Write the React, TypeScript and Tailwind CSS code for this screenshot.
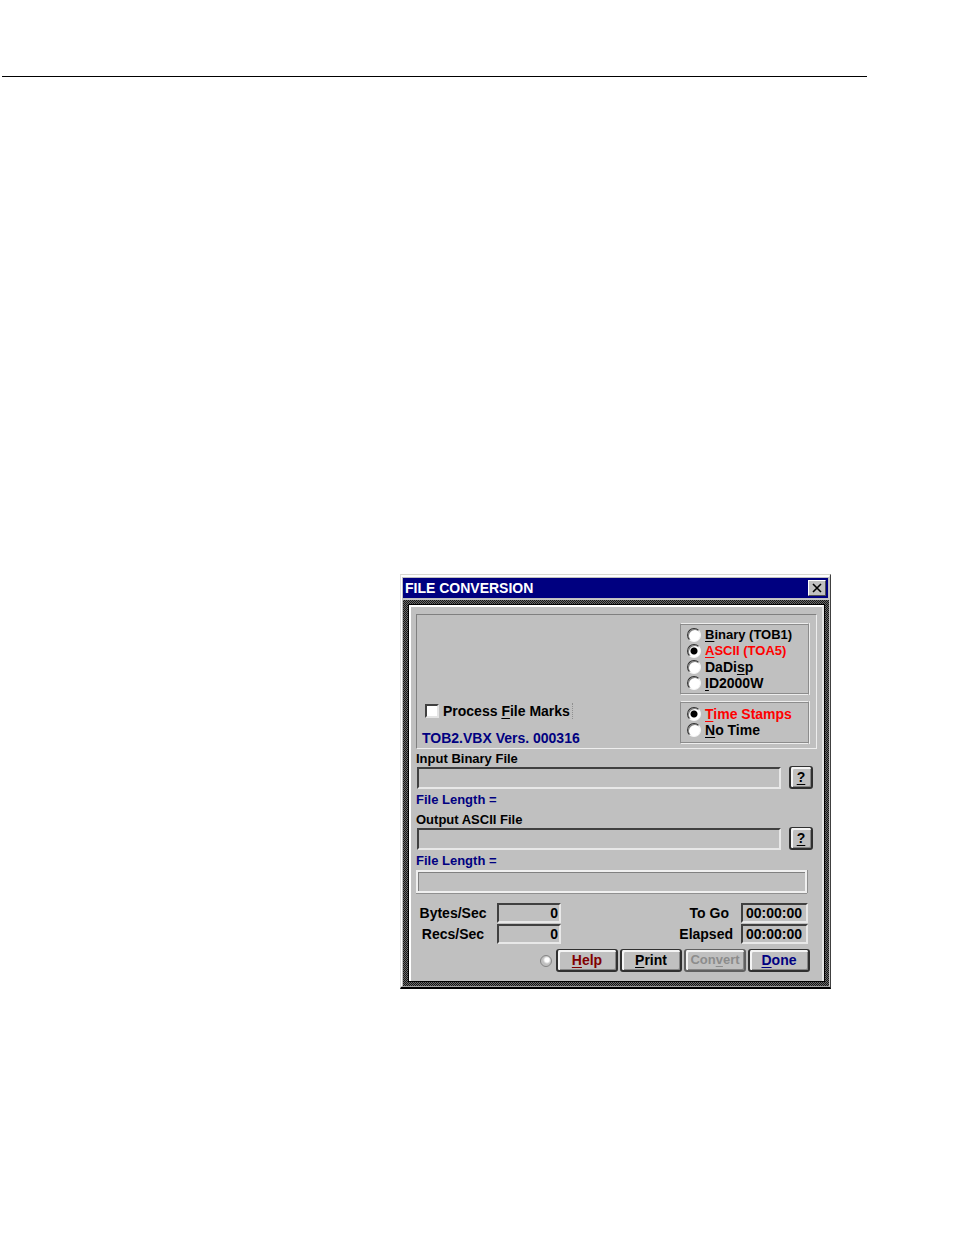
import React from "react";

const radioBase =
  "size-[14px] shrink-0 appearance-none rounded-full border border-t-[#303030] border-l-[#303030] border-b-[#f4f4f4] border-r-[#f4f4f4] bg-white shadow-[inset_1px_1px_0_#808080] checked:bg-[radial-gradient(circle,#000_0_3px,#fff_4px)]";

function Radio({ name, checked, small, children }: { name: string; checked?: boolean; small?: boolean; children: React.ReactNode }) {
  return (
    <label className={`flex items-center gap-1 ${small ? "text-[13px]" : "text-[14px]"} ${checked ? "text-[#ff0000]" : "text-black"}`}>
      <input type="radio" name={name} defaultChecked={checked} className={radioBase} />
      <span>{children}</span>
    </label>
  );
}

function Key({ children }: { children: React.ReactNode }) {
  return <span className="underline decoration-1 underline-offset-2">{children}</span>;
}

function PushButton({ children, className, disabled }: { children: React.ReactNode; className: string; disabled?: boolean }) {
  return (
    <button
      type="button"
      disabled={disabled}
      className={`h-[23px] rounded-[3px] border-t border-r-2 border-b-2 border-l-2 border-[#303030] bg-[#c0c0c0] shadow-[inset_2px_2px_0_#f4f4f4,inset_-1px_-1px_0_#858585] disabled:border-[#606060] ${className}`}
    >
      {children}
    </button>
  );
}

const sunken = "border-2 border-t-[#404040] border-l-[#404040] border-r-[#e8e8e8] border-b-[#e8e8e8] bg-[#c0c0c0]";

const groupBox = "grid border border-[#8c8c8c] border-t-[#eeeeee] border-b-[#eeeeee] px-[6px] shadow-[1px_0_0_#eeeeee,inset_0_1px_0_#8c8c8c,inset_0_-1px_0_#8c8c8c]";

function FileRow({ id, label }: { id: string; label: string }) {
  return (
    <div>
      <label htmlFor={id} className="block h-4 text-[13px] leading-[18px]">{label}</label>
      <div className="flex items-center gap-2 pr-1">
        <input id={id} type="text" className={`ml-px h-[22px] min-w-0 flex-1 px-1 ${sunken}`} />
        <PushButton className="w-6 text-[14px]"><Key>?</Key></PushButton>
      </div>
      <div className="h-5 text-[13px] leading-[22px] text-[#000080]">File Length =</div>
    </div>
  );
}

function Readout({ id, label, value, width, labelClass }: { id: string; label: string; value: string; width: string; labelClass: string }) {
  return (
    <div className="flex items-center justify-end">
      <label htmlFor={id} className={`text-[14px] ${labelClass}`}>{label}</label>
      <input id={id} type="text" readOnly value={value} className={`h-5 text-right text-[14px] ${sunken} ${width}`} />
    </div>
  );
}

export default function App() {
  return (
    <main className="min-h-screen bg-white pb-10 font-['Liberation_Sans',Arial,sans-serif] font-bold text-black">
      <div className="pt-[76px] pr-[87px] pl-[2px]">
        <hr className="border-t border-black" />
      </div>

      <section className="mt-[497px] mr-[123px] ml-[400px] border-t border-r border-b-2 border-l border-t-[#d8d8d0] border-r-[#404040] border-b-black border-l-[#e0e0e0] bg-[#c0c0c0] leading-4">
        <div className="border-t-2 border-r border-b border-l border-t-white border-r-[#c8c8c8] border-b-[#a0a0a0] border-l-white pt-px pl-px">
          <header className="mr-px flex h-5 items-center justify-between bg-[#000080] px-[2px]">
            <h1 className="text-[14px] text-white">FILE CONVERSION</h1>
            <button type="button" aria-label="Close" className="flex h-4 w-[18px] items-center justify-center border border-t-white border-r-[#505050] border-b-[#505050] border-l-white bg-[#c0c0c0]">
              <svg viewBox="0 0 10 10" className="size-[10px]" fill="none" stroke="#000" strokeWidth="1.6">
                <path d="M1 1 9 9M9 1 1 9" />
              </svg>
            </button>
          </header>

          <div className="mt-px border-t border-[#c8c8c8] bg-[repeating-conic-gradient(#161616_0_25%,#6a6a6a_0_50%)] bg-[length:2px_2px] pt-1 pr-1 pb-1 pl-[5px]">
            <div className="border border-black bg-[#c0c0c0]">
              <form className="border-t-2 border-r-2 border-l-2 border-t-white border-r-[#e4e4e4] border-l-white pt-[7px] pr-[5px] pb-[9px] pl-[5px]" onSubmit={(e) => e.preventDefault()}>
                <div className="flex h-[135px] justify-between border border-t-[#808080] border-r-[#eeeeee] border-b-[#eeeeee] border-l-[#808080] pr-[7px] pl-[5px]">
                  <div className="flex flex-col justify-end gap-[11px] pb-[2px] text-[14px]">
                    <label className="flex items-center gap-1 pl-[3px]">
                      <input type="checkbox" className="size-[14px] appearance-none border-2 border-t-[#404040] border-r-[#e4e4e4] border-b-[#e4e4e4] border-l-[#404040] bg-white checked:bg-black" />
                      <span className="border-r border-dotted border-[#909090] pr-[2px]">Process <Key>F</Key>ile Marks</span>
                    </label>
                    <p className="text-[#000080]">TOB2.VBX Vers. 000316</p>
                  </div>
                  <div className="flex w-[129px] flex-col gap-[6px] pt-2">
                    <fieldset className={`h-[72px] grid-rows-4 pt-[3px] ${groupBox}`}>
                      <Radio name="format" small><Key>B</Key>inary (TOB1)</Radio>
                      <Radio name="format" small checked><Key>A</Key>SCII (TOA5)</Radio>
                      <Radio name="format">DaDi<Key>s</Key>p</Radio>
                      <Radio name="format"><Key>I</Key>D2000W</Radio>
                    </fieldset>
                    <fieldset className={`h-[43px] grid-rows-2 py-1 ${groupBox}`}>
                      <Radio name="time" checked><Key>T</Key>ime Stamps</Radio>
                      <Radio name="time"><Key>N</Key>o Time</Radio>
                    </fieldset>
                  </div>
                </div>

                <div className="flex flex-col gap-[2px] pt-px">
                  <FileRow id="input-file" label="Input Binary File" />
                  <FileRow id="output-file" label="Output ASCII File" />
                </div>

                <div role="progressbar" aria-label="Progress" className="mr-[10px] h-[23px] border-2 border-[#f0f0f0] shadow-[0_1px_0_#909090,1px_0_0_#909090,inset_1px_1px_0_#808080]" />

                <div className="flex justify-between pt-[10px] pr-[9px] pl-[3px]">
                  <div className="flex flex-col gap-px">
                    <Readout id="bytes" label="Bytes/Sec" value="0" labelClass="w-[68px] mr-[10px] text-center" width="w-16 pr-px" />
                    <Readout id="recs" label="Recs/Sec" value="0" labelClass="w-[68px] mr-[10px] text-center" width="w-16 pr-px" />
                  </div>
                  <div className="flex flex-col gap-px">
                    <Readout id="togo" label="To Go" value="00:00:00" labelClass="mr-3" width="w-[67px] pr-1" />
                    <Readout id="elapsed" label="Elapsed" value="00:00:00" labelClass="mr-2" width="w-[67px] pr-1" />
                  </div>
                </div>

                <div className="flex items-center justify-end gap-[2px] pt-[5px] pr-[7px]">
                  <span className="mr-[2px] size-3 rounded-full border border-[#858585] bg-[radial-gradient(circle_at_60%_40%,#fff_0_2px,#c0c0c0_4px)]" />
                  <PushButton className="w-[62px] text-[14px] text-[#800000]"><Key>H</Key>elp</PushButton>
                  <PushButton className="w-[62px] text-[14px]"><Key>P</Key>rint</PushButton>
                  <PushButton disabled className="w-[62px] text-[13px] text-[#8c8c8c]"><span>Con<Key>v</Key>ert</span></PushButton>
                  <PushButton className="w-[62px] text-[14px] text-[#000080]"><Key>D</Key>one</PushButton>
                </div>
              </form>
            </div>
          </div>
        </div>
      </section>
    </main>
  );
}
